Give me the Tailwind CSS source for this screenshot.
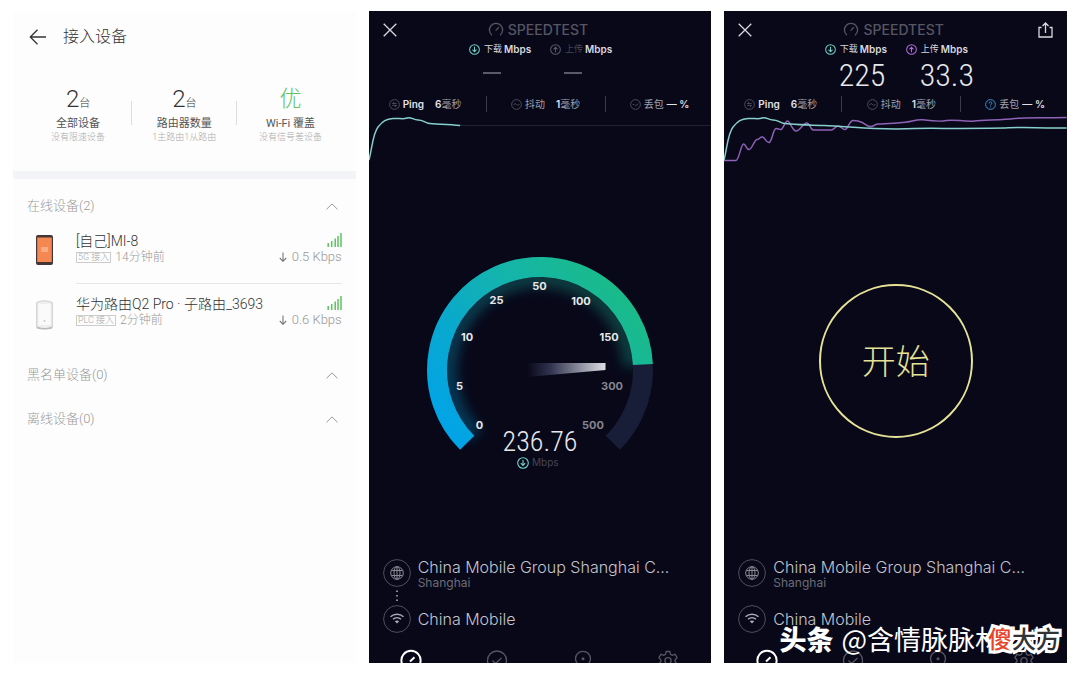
<!DOCTYPE html>
<html lang="zh-CN">
<head>
    <meta charset="UTF-8">
    <meta name="viewport" content="width=device-width, initial-scale=1.0">
    <title>接入设备 / Speedtest</title>
    <script src="https://cdn.jsdelivr.net/npm/@tailwindcss/browser@4"></script>
</head>
<body class="bg-white font-['Inter','Noto_Sans_CJK_SC',sans-serif]">

    <!-- shared icons -->
    <svg class="hidden">
        <symbol id="close" viewBox="0 0 14 14"><path d="M.7.7l12.6 12.6M13.3.7L.7 13.3" fill="none" stroke="currentColor" stroke-width="1.3"/></symbol>
        <symbol id="logo" viewBox="0 0 16 16"><path d="M4 13.2A6.6 6.6 0 1 1 12 13.2M7.6 8.6l3.2-3.4" fill="none" stroke="currentColor" stroke-width="1.3"/></symbol>
        <symbol id="down" viewBox="0 0 12 12"><path d="M6 .7a5.3 5.3 0 1 0 0 10.6A5.3 5.3 0 0 0 6 .7zM6 3v5.2M3.8 6.2L6 8.5l2.2-2.3" fill="none" stroke="currentColor" stroke-width="1.1"/></symbol>
        <symbol id="up" viewBox="0 0 12 12"><path d="M6 .7a5.3 5.3 0 1 0 0 10.6A5.3 5.3 0 0 0 6 .7zM6 9V3.8M3.8 5.8L6 3.5l2.2 2.3" fill="none" stroke="currentColor" stroke-width="1.1"/></symbol>
        <symbol id="ping" viewBox="0 0 12 12"><path d="M6 .7a5.3 5.3 0 1 0 0 10.6A5.3 5.3 0 0 0 6 .7zM8.4 5H3.8l1.7-1.8M3.6 7h4.6L6.5 8.8" fill="none" stroke="currentColor" stroke-width=".9"/></symbol>
        <symbol id="jitter" viewBox="0 0 12 12"><path d="M6 .7a5.3 5.3 0 1 0 0 10.6A5.3 5.3 0 0 0 6 .7zM2.8 6.4C4 4.4 5 5 6 6s2 1.500 3.200-.4" fill="none" stroke="currentColor" stroke-width=".9"/></symbol>
        <symbol id="loss" viewBox="0 0 12 12"><path d="M6 .7a5.3 5.3 0 1 0 0 10.6A5.3 5.3 0 0 0 6 .7zM3 6h1.500M5.200 6.500l1 .8L9 5.200" fill="none" stroke="currentColor" stroke-width=".9"/></symbol>
        <symbol id="help" viewBox="0 0 12 12"><path d="M6 .7a5.3 5.3 0 1 0 0 10.6A5.3 5.3 0 0 0 6 .7zM4.500 4.800C4.500 2.600 7.600 2.700 7.500 4.600 7.400 5.700 6 5.700 6 7.100M6 8.200v1" fill="none" stroke="currentColor" stroke-width="1"/></symbol>
        <symbol id="globe" viewBox="0 0 28 28"><g fill="none" stroke="currentColor"><circle cx="14" cy="14" r="13.4" opacity=".7"/><g stroke="#8a8a95"><circle cx="14" cy="14" r="6.300"/><ellipse cx="14" cy="14" rx="3" ry="6.300"/><path d="M14 7.700v12.600M8.400 11.500h11.200M8.400 16.500h11.200"/></g></g></symbol>
        <symbol id="wifi" viewBox="0 0 28 28"><circle cx="14" cy="14" r="13.4" fill="none" stroke="currentColor" opacity=".7"/><path d="M7.500 11.800c3.700-3.300 9.300-3.300 13 0M10 14.300c2.300-2 5.700-2 8 0" fill="none" stroke="#aaaab4" stroke-width="1.500"/><path d="M11.800 16.300c1.300-1 3.100-1 4.400 0L14 18.600z" fill="#aaaab4"/></symbol>
        <symbol id="nav-speed" viewBox="0 0 22 22"><path d="M6 19.500a9.600 9.600 0 1 1 10 0M10 12.500l4.500-4.300" fill="none" stroke="currentColor" stroke-width="2"/></symbol>
        <symbol id="nav-check" viewBox="0 0 22 22"><path d="M11 2a9.500 9.500 0 1 0 0 19 9.500 9.500 0 0 0 0-19zM6.500 11.500l3 3 6-5.500" fill="none" stroke="currentColor" stroke-width="1.300"/></symbol>
        <symbol id="nav-pin" viewBox="0 0 22 22"><path d="M11 21.500C7 17.500 3.500 14 3.500 9.800a7.500 7.500 0 0 1 15 0C18.500 14 15 17.500 11 21.500z" fill="none" stroke="currentColor" stroke-width="1.300"/><circle cx="11" cy="9.800" r="1.500" fill="currentColor"/></symbol>
        <symbol id="nav-gear" viewBox="0 0 22 22"><path d="M9.200 2.500h3.600l.7 2.800 1.800 1 2.800-.9 2 3.300-2 2v2l2 2-2 3.200-2.800-.8-1.800 1-.7 2.800H9.200l-.7-2.800-1.800-1-2.800.8-2-3.200 2-2v-2l-2-2 2-3.300 2.800.9 1.800-1zM11 8.600a3.100 3.100 0 1 0 0 6.200 3.100 3.100 0 0 0 0-6.200z" fill="none" stroke="currentColor" stroke-width="1.300"/></symbol>
        <symbol id="chevron" viewBox="0 0 12 7"><path d="M.5 6.300L6 .9l5.500 5.400" fill="none" stroke="currentColor" stroke-width="1"/></symbol>
        <symbol id="signal" viewBox="0 0 15 14"><path d="M1.200 14v-4M4.700 14V8M8.200 14V5.500M11 14V3M14 14V0" fill="none" stroke="#5cc45e" stroke-width="1.500"/></symbol>
        <symbol id="arrow-down" viewBox="0 0 8 10"><path d="M4 .5v8.700M.8 6L4 9.300 7.200 6" fill="none" stroke="currentColor" stroke-width="1.100"/></symbol>
    </svg>

    <main class="relative grid grid-cols-3 gap-[13px] min-h-screen px-[13px] pt-[11px] pb-3">

        <!-- connected devices -->
        <section class="bg-[#fdfdfd] font-['Roboto','Noto_Sans_CJK_SC',sans-serif] font-light">
            <header class="flex items-center gap-4 pt-[14px] px-4">
                <button aria-label="返回"><svg class="w-[18px] h-4 text-[#333]" viewBox="0 0 18 16"><path d="M17 8H1.500M8.500.8L1.300 8l7.200 7.200" fill="none" stroke="currentColor" stroke-width="1.300"/></svg></button>
                <h1 class="text-base leading-6 text-[#333]">接入设备</h1>
            </header>

            <div class="grid grid-cols-3 px-3 pt-9 pb-7 text-center">
                <div>
                    <p class="h-7 text-2xl leading-7 text-[#333]">2<span class="text-[11px] leading-none">台</span></p>
                    <p class="h-[14px] text-[11px] leading-[14px] text-[#555] mt-1 font-normal">全部设备</p>
                    <p class="h-3 text-[9px] leading-3 text-[#aaa]">没有限速设备</p>
                </div>
                <div class="relative">
                    <span class="absolute left-0 top-4 h-6 w-px bg-[#ddd]"></span>
                    <span class="absolute right-0 top-4 h-6 w-px bg-[#ddd]"></span>
                    <p class="h-7 text-2xl leading-7 text-[#333]">2<span class="text-[11px] leading-none">台</span></p>
                    <p class="h-[14px] text-[11px] leading-[14px] text-[#555] mt-1 font-normal">路由器数量</p>
                    <p class="h-3 text-[9px] leading-3 text-[#aaa]">1主路由1从路由</p>
                </div>
                <div>
                    <p class="h-7 text-[22px] leading-7 text-[#5cc45e]">优</p>
                    <p class="h-[14px] text-[11px] leading-[14px] text-[#555] mt-1 font-normal">Wi-Fi 覆盖</p>
                    <p class="h-3 text-[9px] leading-3 text-[#aaa]">没有信号差设备</p>
                </div>
            </div>
            <div class="h-2 bg-[#f3f4f7]"></div>

            <div class="px-[14px] pt-[18px] text-[#999]">
                <button class="flex w-full items-center justify-between pr-1 text-[13px] leading-[18px]">在线设备(2)<svg class="w-3 h-[7px]"><use href="#chevron"/></svg></button>
                <ul>
                    <li class="flex">
                        <div class="w-[49px] pt-5 pl-[9px]">
                            <svg class="w-[17px] h-[30px]" viewBox="0 0 17 30"><rect width="17" height="30" rx="2" fill="#443634"/><rect x="1.200" y="2.500" width="14.600" height="24.500" fill="#f58752"/><rect x="5" y="12" width="7" height="5" fill="#f9ab83"/></svg>
                        </div>
                        <div class="flex flex-1 justify-between border-b border-[#e6e6ea] pt-[18px] pb-[18px]">
                            <div>
                                <h2 class="text-sm leading-4 text-[#333]">[自己]MI-8</h2>
                                <p class="flex items-center gap-1 text-xs leading-4"><span class="border border-[#ccc] px-px text-[9px] leading-[9px] text-[#aaa]">5G 接入</span>14分钟前</p>
                            </div>
                            <div class="flex flex-col items-end">
                                <svg class="w-[15px] h-[14px] mb-0.5"><use href="#signal"/></svg>
                                <p class="flex items-center gap-[5px] text-[13px] leading-4"><svg class="w-2 h-[10px] text-[#777]"><use href="#arrow-down"/></svg>0.5 Kbps</p>
                            </div>
                        </div>
                    </li>
                    <li class="flex">
                        <div class="w-[49px] pt-4 pl-[9px]">
                            <svg class="w-[17px] h-[30px]" viewBox="0 0 17 30"><path d="M.7 2.500Q8.500-1 16.300 2.500V27q-7.800 3.500-15.600 0z" fill="#eee" stroke="#ccc"/><path d="M2.500 4h12v21h-12z" fill="#fafafa"/><path d="M.7 26.500q7.800 3 15.600 0v2q-7.800 2-15.600 0z" fill="#bbb"/><circle cx="8.500" cy="21" r="1" fill="#ccc"/></svg>
                        </div>
                        <div class="flex flex-1 justify-between pt-3">
                            <div>
                                <h2 class="text-sm leading-4 text-[#333]">华为路由Q2 Pro · 子路由_3693</h2>
                                <p class="flex items-center gap-1 text-xs leading-4"><span class="border border-[#ccc] px-px text-[9px] leading-[9px] text-[#aaa]">PLC 接入</span>2分钟前</p>
                            </div>
                            <div class="flex flex-col items-end">
                                <svg class="w-[15px] h-[14px] mb-0.5"><use href="#signal"/></svg>
                                <p class="flex items-center gap-[5px] text-[13px] leading-4"><svg class="w-2 h-[10px] text-[#777]"><use href="#arrow-down"/></svg>0.6 Kbps</p>
                            </div>
                        </div>
                    </li>
                </ul>
                <button class="mt-9 flex w-full items-center justify-between pr-1 text-[13px] leading-[18px]">黑名单设备(0)<svg class="w-3 h-[7px]"><use href="#chevron"/></svg></button>
                <button class="mt-[26px] flex w-full items-center justify-between pr-1 text-[13px] leading-[18px]">离线设备(0)<svg class="w-3 h-[7px]"><use href="#chevron"/></svg></button>
            </div>
        </section>

        <!-- test running -->
        <section class="flex flex-col bg-[#080819] text-[#d8d8de]">
            <header class="grid grid-cols-[1fr_auto_1fr] items-center px-[14px] pt-[10px]">
                <button aria-label="关闭" class="w-[14px]"><svg class="w-[14px] h-[14px]"><use href="#close"/></svg></button>
                <h2 class="flex items-center gap-1 pr-1 text-sm leading-[18px] font-medium text-[#565663]"><svg class="w-4 h-4"><use href="#logo"/></svg>SPEEDTEST</h2>
            </header>
            <div class="flex h-[54px] justify-center gap-5 pt-[3px] text-[10px] leading-[14px] whitespace-nowrap">
                <div class="w-[61px]">
                    <p class="flex items-center gap-1"><svg class="w-[11px] h-[11px] shrink-0 text-[#6fd3c8]"><use href="#down"/></svg><span class="text-[9px]">下载</span><b class="-ml-0.5 font-semibold">Mbps</b></p>
                    <div class="mt-4 ml-[14px] h-0.5 w-[18px] bg-[#5a5a66]"></div>
                </div>
                <div class="w-[61px]">
                    <p class="flex items-center gap-1"><svg class="w-[11px] h-[11px] shrink-0 text-[#5a5a66]"><use href="#up"/></svg><span class="text-[9px] text-[#464653]">上传</span><b class="-ml-0.5 font-semibold">Mbps</b></p>
                    <div class="mt-4 ml-[14px] h-0.5 w-[18px] bg-[#5a5a66]"></div>
                </div>
            </div>
            <div class="flex items-center justify-between pl-5 pr-[22px] pt-[3px] text-[10px] leading-4 text-[#a2a2ac]">
                <p class="flex items-center gap-[3px]"><svg class="w-[11px] h-[11px] text-[#5a5a66]"><use href="#ping"/></svg><b class="font-semibold text-[#e2e2e6]">Ping</b><span class="ml-2"><b class="font-semibold text-[#e2e2e6]">6</b>毫秒</span></p>
                <span class="h-4 w-px bg-[#3c3c49]"></span>
                <p class="flex items-center gap-[3px]"><svg class="w-[11px] h-[11px] text-[#5a5a66]"><use href="#jitter"/></svg>抖动<span class="ml-2"><b class="font-semibold text-[#e2e2e6]">1</b>毫秒</span></p>
                <span class="h-4 w-px bg-[#3c3c49]"></span>
                <p class="flex items-center gap-[3px]"><svg class="w-[11px] h-[11px] text-[#5a5a66]"><use href="#loss"/></svg>丢包<b class="font-semibold text-[#e2e2e6]">— %</b></p>
            </div>
            <svg class="mt-px h-[50px] w-full" viewBox="0 0 342 50" preserveAspectRatio="none" fill="none">
                <path d="M91 12.500H342" stroke="#20202f"/>
                <path d="M0 47C3 35 4 20 9 14S17 6 24 5.500C30 5 34 6.500 38 5S44 7 49 7S54 9 59 10.200S75 11 91 12.500" stroke="#86cfcb" stroke-width="1.500"/>
            </svg>

            <div class="flex flex-1 items-center justify-center">
                <svg class="h-[236px] w-[240px] font-['Inter',sans-serif]" viewBox="420 244 240 236" fill="none">
                    <defs>
                        <linearGradient id="arc" gradientUnits="userSpaceOnUse" x1="450" y1="450" x2="630" y2="300"><stop stop-color="#00a3ea"/><stop offset=".35" stop-color="#0aa9cc"/><stop offset=".65" stop-color="#14b4ac"/><stop offset="1" stop-color="#1abb88"/></linearGradient>
                        <linearGradient id="needle"><stop stop-color="#30324a" stop-opacity="0"/><stop offset=".3" stop-color="#303450"/><stop offset="1" stop-color="#dedee2"/></linearGradient>
                        <filter id="blur" x="-20%" y="-20%" width="140%" height="140%"><feGaussianBlur stdDeviation="6"/></filter>
                    </defs>
                    <path d="M474.900 436.100A92 92 0 1 1 631.900 367" stroke="url(#arc)" stroke-width="18" opacity=".3" filter="url(#blur)"/>
                    <path d="M467.200 443.800A103 103 0 1 1 612.800 443.800" stroke="#181d38" stroke-width="20"/>
                    <path d="M467.200 443.800A103 103 0 1 1 642.900 365.500" stroke="url(#arc)" stroke-width="20"/>
                    <path d="M527 364H605.500V371L527 378z" fill="url(#needle)"/>
                    <g fill="#e8e8ec" font-size="11" font-weight="700" text-anchor="middle">
                        <text x="479.500" y="430">0</text>
                        <text x="459.500" y="391">5</text>
                        <text x="467" y="342">10</text>
                        <text x="496.500" y="305">25</text>
                        <text x="539.500" y="291">50</text>
                        <text x="581" y="306">100</text>
                        <text x="609" y="342">150</text>
                        <text x="612" y="391" fill="#85858f">300</text>
                        <text x="593" y="430" fill="#85858f">500</text>
                    </g>
                    <text x="540" y="452" text-anchor="middle" font-size="28" font-weight="300" fill="#e8e8ec" class="font-['Roboto_Condensed','Liberation_Sans_Narrow','Roboto',sans-serif]">236.76</text>
                    <use href="#down" x="517" y="458" width="12" height="12" class="text-[#6fd3c8]"/>
                    <text x="532" y="467" font-size="10" fill="#464653">Mbps</text>
                </svg>
            </div>

            <div class="px-[14px] text-[#6c6c78]">
                <div class="flex gap-[7px]">
                    <svg class="w-7 h-7"><use href="#globe"/></svg>
                    <div class="h-7">
                        <p class="text-base leading-4 font-light text-[#c4c4cc]">China Mobile Group Shanghai C...</p>
                        <p class="text-xs leading-4">Shanghai</p>
                    </div>
                </div>
                <svg class="my-0.5 h-[14px] w-7" viewBox="0 0 28 14"><path d="M14 1.500v11" stroke="#b4b4bc" stroke-width="1.500" stroke-dasharray="1.500 3"/></svg>
                <div class="flex items-center gap-[7px]">
                    <svg class="w-7 h-7"><use href="#wifi"/></svg>
                    <p class="text-base leading-[18px] font-light text-[#c4c4cc]">China Mobile</p>
                </div>
            </div>
            <nav class="mt-4 flex h-[14px] items-start justify-around overflow-hidden text-[#565663]">
                <button aria-label="测速" class="text-white"><svg class="w-[22px] h-[22px]"><use href="#nav-speed"/></svg></button>
                <button aria-label="结果"><svg class="w-[22px] h-[22px]"><use href="#nav-check"/></svg></button>
                <button aria-label="地图"><svg class="w-[22px] h-[22px]"><use href="#nav-pin"/></svg></button>
                <button aria-label="设置"><svg class="w-[22px] h-[22px]"><use href="#nav-gear"/></svg></button>
            </nav>
        </section>

        <!-- test finished -->
        <section class="flex flex-col bg-[#080819] text-[#d8d8de]">
            <header class="grid grid-cols-[1fr_auto_1fr] items-center px-[14px] pt-[10px]">
                <button aria-label="关闭" class="w-[14px]"><svg class="w-[14px] h-[14px]"><use href="#close"/></svg></button>
                <h2 class="flex items-center gap-1 pr-1 text-sm leading-[18px] font-medium text-[#565663]"><svg class="w-4 h-4"><use href="#logo"/></svg>SPEEDTEST</h2>
                <button aria-label="分享" class="justify-self-end"><svg class="w-[15px] h-4" viewBox="0 0 15 16"><path d="M3.500 5.500H1V15h13V5.500h-2.500M7.500 11V1M4.500 4l3-3 3 3" fill="none" stroke="currentColor" stroke-width="1.300"/></svg></button>
            </header>
            <div class="flex h-[54px] justify-center gap-5 pt-[3px] text-[10px] leading-[14px] whitespace-nowrap">
                <div class="w-[61px]">
                    <p class="flex items-center gap-1"><svg class="w-[11px] h-[11px] shrink-0 text-[#6fd3c8]"><use href="#down"/></svg><span class="text-[9px]">下载</span><b class="-ml-0.5 font-semibold">Mbps</b></p>
                    <p class="ml-[14px] text-[32px] leading-[38px] font-light text-[#e8e8ec] font-['Roboto_Condensed','Liberation_Sans_Narrow','Roboto',sans-serif]">225</p>
                </div>
                <div class="w-[61px]">
                    <p class="flex items-center gap-1"><svg class="w-[11px] h-[11px] shrink-0 text-[#b56be0]"><use href="#up"/></svg><span class="text-[9px]">上传</span><b class="-ml-0.5 font-semibold">Mbps</b></p>
                    <p class="ml-[14px] text-[32px] leading-[38px] font-light text-[#e8e8ec] font-['Roboto_Condensed','Liberation_Sans_Narrow','Roboto',sans-serif]">33.3</p>
                </div>
            </div>
            <div class="flex items-center justify-between pl-5 pr-[22px] pt-[3px] text-[10px] leading-4 text-[#a2a2ac]">
                <p class="flex items-center gap-[3px]"><svg class="w-[11px] h-[11px] text-[#5a5a66]"><use href="#ping"/></svg><b class="font-semibold text-[#e2e2e6]">Ping</b><span class="ml-2"><b class="font-semibold text-[#e2e2e6]">6</b>毫秒</span></p>
                <span class="h-4 w-px bg-[#3c3c49]"></span>
                <p class="flex items-center gap-[3px]"><svg class="w-[11px] h-[11px] text-[#5a5a66]"><use href="#jitter"/></svg>抖动<span class="ml-2"><b class="font-semibold text-[#e2e2e6]">1</b>毫秒</span></p>
                <span class="h-4 w-px bg-[#3c3c49]"></span>
                <p class="flex items-center gap-[3px]"><svg class="w-[11px] h-[11px] text-[#3f9fe0]"><use href="#help"/></svg>丢包<b class="font-semibold text-[#e2e2e6]">— %</b></p>
            </div>
            <svg class="mt-px h-[50px] w-full" viewBox="0 0 342 50" preserveAspectRatio="none" fill="none" stroke-width="1.500">
                <path d="M0 47.500H12C15 47 17 31 19.500 31S22 36.500 25 36.500S30 27 33 26.500S36 23.500 38.500 24S42 30 45 29.500S49 15.500 52 15.500S55 17 57 16.500S61 8 63.500 8S68 18 72 18S79 10 82.500 10S86 16.500 89 17H107C110 17 111 13 114 13S118 17 121 16.500S125 7.500 129 7.500S135 8 138 9.500S143 14 147 13.500S150 11 154 11S180 10 188 8S196 6.500 200 7S215 9 222 7.500S240 9 250 8S280 7 290 5.500S320 5 342 4.500" stroke="#8e62b4"/>
                <path d="M0 47C3 35 4 20 9 14S17 6 24 5.500C30 5 34 6.500 38 5S44 7 49 7S54 9 59 10.200S85 12 100 12.500S135 15 150 15.500S180 16 190 15.500S260 16 284 14.800S310 15.500 342 15" stroke="#86cfcb"/>
            </svg>

            <div class="flex flex-1 items-center justify-center">
                <button class="size-[154px] rounded-full border-2 border-[#e6e397] text-[34px] font-light text-[#e6e397]">开始</button>
            </div>

            <div class="px-[14px] text-[#6c6c78]">
                <div class="flex gap-[7px]">
                    <svg class="w-7 h-7"><use href="#globe"/></svg>
                    <div class="h-7">
                        <p class="text-base leading-4 font-light text-[#c4c4cc]">China Mobile Group Shanghai C...</p>
                        <p class="text-xs leading-4">Shanghai</p>
                    </div>
                </div>
                <div class="mt-[18px] flex items-center gap-[7px]">
                    <svg class="w-7 h-7"><use href="#wifi"/></svg>
                    <p class="text-base leading-[18px] font-light text-[#c4c4cc]">China Mobile</p>
                </div>
            </div>
            <nav class="mt-4 flex h-[14px] items-start justify-around overflow-hidden text-[#565663]">
                <button aria-label="测速" class="text-white"><svg class="w-[22px] h-[22px]"><use href="#nav-speed"/></svg></button>
                <button aria-label="结果"><svg class="w-[22px] h-[22px]"><use href="#nav-check"/></svg></button>
                <button aria-label="地图"><svg class="w-[22px] h-[22px]"><use href="#nav-pin"/></svg></button>
                <button aria-label="设置"><svg class="w-[22px] h-[22px]"><use href="#nav-gear"/></svg></button>
            </nav>
        </section>

        <!-- watermarks -->
        <p class="absolute right-6 bottom-5 flex items-center gap-2 text-[27px] leading-8 whitespace-nowrap text-white font-['Noto_Sans_CJK_SC',sans-serif]"><b class="font-black">头条</b><span>@含情脉脉林老师</span></p>
        <p class="absolute right-5 bottom-[21px] text-2xl leading-8 font-medium text-[#333] [-webkit-text-stroke:6px_white] [paint-order:stroke_fill] font-['Noto_Sans_CJK_SC',sans-serif]"><span class="text-[#e8442a]">傻</span>大方</p>
    </main>
</body>
</html>
